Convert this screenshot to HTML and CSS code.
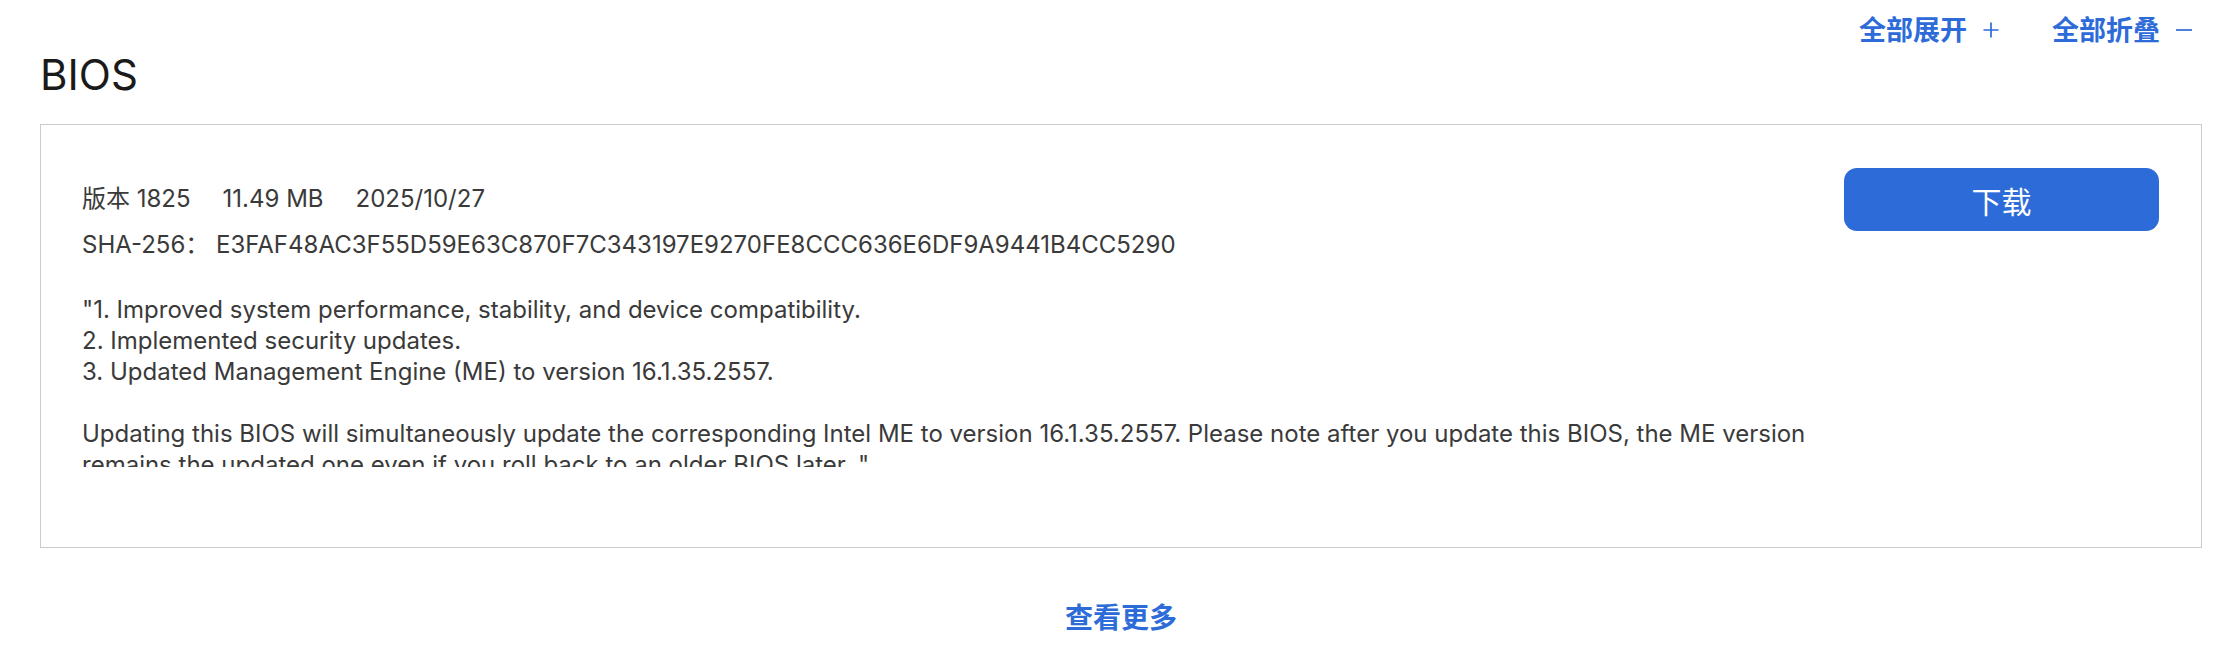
FILE: index.html
```html
<!DOCTYPE html>
<html lang="zh-CN">
<head>
<meta charset="utf-8">
<title>BIOS</title>
<link rel="stylesheet" href="styles.css">
</head>
<body>
<div class="wrap">
  <div class="toolbar">
    <a class="tool-link" href="#">全部展开<svg class="tool-icon" viewBox="0 0 18 18" width="18" height="18"><path d="M9 1.5V16.5M1.5 9H16.5" fill="none" stroke="currentColor" stroke-width="1.7"/></svg></a>
    <a class="tool-link" href="#">全部折叠<svg class="tool-icon" viewBox="0 0 18 18" width="18" height="18"><path d="M1 9H17" fill="none" stroke="currentColor" stroke-width="1.7"/></svg></a>
  </div>
  <h2 class="title">BIOS</h2>
  <div class="card">
    <div class="info">
      <div class="meta"><span class="meta-item">版本 1825</span><span class="meta-item">11.49 MB</span><span class="meta-item">2025/10/27</span></div>
      <div class="sha">SHA-256： E3FAF48AC3F55D59E63C870F7C343197E9270FE8CCC636E6DF9A9441B4CC5290</div>
      <div class="desc">"1. Improved system performance, stability, and device compatibility.
2. Implemented security updates.
3. Updated Management Engine (ME) to version 16.1.35.2557.

Updating this BIOS will simultaneously update the corresponding Intel ME to version 16.1.35.2557. Please note after you update this BIOS, the ME version remains the updated one even if you roll back to an older BIOS later. "</div>
    </div>
    <div class="actions">
      <a class="download" href="#">下载</a>
    </div>
  </div>
  <div class="more"><a class="more-link" href="#">查看更多</a></div>
</div>
</body>
</html>
```
FILE: styles.css
```css
* { box-sizing: border-box; }
html, body { margin: 0; padding: 0; background: #fff; }
body {
  font-family: Inter, "Noto Sans CJK SC", sans-serif;
  color: #3a3a3a;
}
a { text-decoration: none; }

.wrap {
  margin-left: 40px;
  width: 2162px;
}

.toolbar {
  display: flex;
  justify-content: flex-end;
  gap: 52px;
  padding-top: 14px;
  padding-right: 9px;
  height: 44px;
}
.tool-link {
  display: flex;
  align-items: center;
  gap: 15px;
  font-family: "Noto Sans CJK SC", sans-serif;
  font-weight: 700;
  font-size: 27px;
  line-height: 28px;
  color: #2d6bd9;
}
.tool-icon { display: block; margin-top: 2px; }

.title {
  margin: 5px 0 0 0;
  font-weight: 400;
  font-size: 42px;
  line-height: 52px;
  color: #1a1a1a;
}

.card {
  margin-top: 23px;
  display: flex;
  border: 1px solid #cbcbcb;
  padding: 43px 42px 42px 41px;
}
.info {
  flex: 1;
  min-width: 0;
  font-size: 24px;
}
.meta {
  margin-top: 15px;
  line-height: 32px;
  display: flex;
  gap: 32px;
}
.sha {
  margin-top: 14px;
  line-height: 32px;
}
.desc {
  margin-top: 33px;
  line-height: 31px;
  height: 173px;
  overflow: hidden;
  white-space: pre-line;
  margin-bottom: 38px;
}
.actions {
  flex: none;
  width: 315px;
  margin-left: 20px;
}
.download {
  display: flex;
  align-items: center;
  justify-content: center;
  height: 63px;
  border-radius: 13px;
  background: #2d6bd9;
  color: #fff;
  font-family: "Noto Sans CJK SC", sans-serif;
  font-size: 30px;
}

.more {
  margin-top: 54px;
  text-align: center;
}
.more-link {
  font-family: "Noto Sans CJK SC", sans-serif;
  font-weight: 700;
  font-size: 28px;
  line-height: 28px;
  color: #2d6bd9;
}
```
